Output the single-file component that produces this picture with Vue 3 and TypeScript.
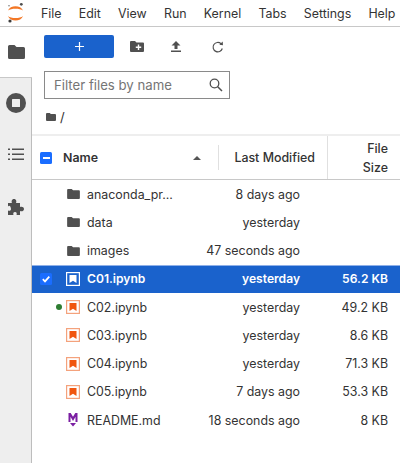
<script setup lang="ts">
interface Entry {
  name: string
  type: 'folder' | 'nb' | 'md'
  modified: string
  size: string
  selected?: boolean
  running?: boolean
}
const menus: string[] = ['File', 'Edit', 'View', 'Run', 'Kernel', 'Tabs', 'Settings', 'Help']
const entries: Entry[] = [
  { name: 'anaconda_pr...', type: 'folder', modified: '8 days ago', size: '' },
  { name: 'data', type: 'folder', modified: 'yesterday', size: '' },
  { name: 'images', type: 'folder', modified: '47 seconds ago', size: '' },
  { name: 'C01.ipynb', type: 'nb', modified: 'yesterday', size: '56.2 KB', selected: true },
  { name: 'C02.ipynb', type: 'nb', modified: 'yesterday', size: '49.2 KB', running: true },
  { name: 'C03.ipynb', type: 'nb', modified: 'yesterday', size: '8.6 KB' },
  { name: 'C04.ipynb', type: 'nb', modified: 'yesterday', size: '71.3 KB' },
  { name: 'C05.ipynb', type: 'nb', modified: '7 days ago', size: '53.3 KB' },
  { name: 'README.md', type: 'md', modified: '18 seconds ago', size: '8 KB' },
]
</script>

<template>
  <div class="app">
    <header class="menubar">
      <svg class="logo" width="24" height="26" viewBox="0 0 24 26">
        <path d="M8 10.500 C10 4.800 21 4.800 23 10.500 C20 8 11 8 8 10.500Z" fill="#f37726" />
        <path d="M8 16 C10 22 21 22 23 16 C20 18.800 11 18.800 8 16Z" fill="#f37726" />
        <circle cx="21.300" cy="4.300" r="1.400" fill="#4e4e4e" />
        <circle cx="9" cy="5.800" r="0.800" fill="#7a7a7a" />
        <circle cx="10" cy="21" r="1.600" fill="#3c3c3c" />
      </svg>
      <nav class="menus">
        <span v-for="m in menus" :key="m">{{ m }}</span>
      </nav>
    </header>
    <div class="main">
      <aside class="sidebar">
        <div class="tab active">
          <svg width="17" height="14" viewBox="0 0 17 14">
            <path d="M1.500 0h5l2 2h7A1.500 1.500 0 0 1 17 3.500v9a1.500 1.500 0 0 1-1.500 1.500h-14A1.500 1.500 0 0 1 0 12.500v-11A1.500 1.500 0 0 1 1.500 0Z" fill="#505050" />
          </svg>
        </div>
        <div class="tab stop">
          <svg width="20" height="20" viewBox="0 0 20 20">
            <circle cx="10" cy="10" r="10" fill="#505050" />
            <rect x="6" y="6" width="8" height="8" rx="0.500" fill="#eeeeee" />
          </svg>
        </div>
        <div class="tab list">
          <svg width="16" height="13" viewBox="0 0 16 13" fill="#505050">
            <rect x="0" y="0.500" width="2" height="1.500" />
            <rect x="4" y="0.500" width="12" height="1.500" />
            <rect x="0" y="5.500" width="2" height="1.500" />
            <rect x="4" y="5.500" width="12" height="1.500" />
            <rect x="0" y="10.500" width="2" height="1.500" />
            <rect x="4" y="10.500" width="12" height="1.500" />
          </svg>
        </div>
        <div class="tab puzzle">
          <svg width="18" height="18" viewBox="0 0 18 18">
            <path d="M1 5h4C4.300 3.800 4.500 1 7 1s2.700 2.800 2 4h4v4c1.200-.7 4-.5 4 2s-2.800 2.700-4 2v4H9.500c.5-1.500.3-3-1.500-3s-2 1.500-1.500 3H1v-4.500c1.500.5 3 .3 3-1.500S2.500 6.500 1 8.500Z" fill="#505050" />
          </svg>
        </div>
      </aside>
      <section class="browser">
        <div class="toolbar">
          <button class="new" type="button">
            <svg width="9" height="9" viewBox="0 0 9 9"><path d="M3.900 0h1.200v3.900H9v1.200H5.100V9H3.900V5.100H0V3.900h3.900Z" fill="#fff" /></svg>
          </button>
          <svg class="tool t1" width="14" height="11" viewBox="0 0 14 11">
            <path d="M1 0h4l1.500 1.500H13a1 1 0 0 1 1 1V10a1 1 0 0 1-1 1H1a1 1 0 0 1-1-1V1a1 1 0 0 1 1-1Z" fill="#505050" />
            <path d="M7.800 3.500h1.400v2h2v1.400h-2v2H7.800v-2h-2V5.500h2Z" fill="#fff" />
          </svg>
          <svg class="tool t2" width="10" height="11" viewBox="0 0 10 11">
            <path d="M5 0 9.500 4.500H6.500V8h-3V4.500H.5Z M0 9.500h10V11H0Z" fill="#505050" />
          </svg>
          <svg class="tool t3" width="12" height="12" viewBox="0 0 12 12">
            <path d="M10.300 7.500A4.700 4.700 0 1 1 9 2.700" fill="none" stroke="#505050" stroke-width="1.200" />
            <path d="M7.300 3.800 11 4.200 10.700.5Z" fill="#505050" />
          </svg>
        </div>
        <div class="filter">
          <span class="placeholder">Filter files by name</span>
          <svg width="14" height="14" viewBox="0 0 14 14">
            <circle cx="5.500" cy="5.500" r="4.300" fill="none" stroke="#505050" stroke-width="1.300" />
            <path d="M8.700 8.700 13 13" stroke="#505050" stroke-width="1.500" />
          </svg>
        </div>
        <div class="crumbs">
          <svg width="10" height="8" viewBox="0 0 10 8">
            <path d="M1 0h2.800l1 1H9a1 1 0 0 1 1 1v5a1 1 0 0 1-1 1H1a1 1 0 0 1-1-1V1a1 1 0 0 1 1-1Z" fill="#505050" />
          </svg>
          <span>/</span>
        </div>
        <div class="band"></div>
        <div class="head">
          <div class="h-check"><span class="minus"></span></div>
          <div class="h-name">
            <span>Name</span>
            <i class="caret"></i>
          </div>
          <div class="h-mod">Last Modified</div>
          <div class="h-size">File<br />Size</div>
        </div>
        <ul class="rows">
          <li v-for="e in entries" :key="e.name" class="row" :class="{ selected: e.selected }">
            <span class="check">
              <svg v-if="e.selected" width="12" height="12" viewBox="0 0 12 12">
                <rect width="12" height="12" rx="1.500" fill="#1a6dff" />
                <path d="M2.800 6.200 5 8.400 9.300 3.600" fill="none" stroke="#fff" stroke-width="1.700" />
              </svg>
            </span>
            <span class="dot-slot"><i v-if="e.running" class="dot"></i></span>
            <span class="icon">
              <svg v-if="e.type === 'folder'" width="13" height="10" viewBox="0 0 14 11">
                <path d="M1 0h4l1.500 1.500H13a1 1 0 0 1 1 1V10a1 1 0 0 1-1 1H1a1 1 0 0 1-1-1V1a1 1 0 0 1 1-1Z" fill="#505050" />
              </svg>
              <svg v-else-if="e.type === 'nb'" width="14" height="14" viewBox="0 0 14 14">
                <rect x="0.600" y="0.600" width="12.800" height="12.800" fill="none" :stroke="e.selected ? '#fff' : '#f4a27c'" stroke-width="1.200" />
                <path d="M3.500 3h7v8L7 8.800 3.500 11Z" :fill="e.selected ? '#fff' : '#f0560f'" />
              </svg>
              <svg v-else width="10" height="14" viewBox="0 0 10 14">
                <path d="M.5 0h2.200L5 3.800 7.300 0h2.200v9H7.500V3.800L5 8 2.500 3.800V9H.5Z" fill="#7b1fa2" />
                <path d="M2 10h6l-3 3.500Z" fill="#7b1fa2" />
              </svg>
            </span>
            <span class="name">{{ e.name }}</span>
            <span class="mod">{{ e.modified }}</span>
            <span class="size">{{ e.size }}</span>
          </li>
        </ul>
      </section>
    </div>
  </div>
</template>

<style>
html, body { margin: 0; background: #fff; }
</style>

<style scoped>
.app {
  width: 400px;
  height: 463px;
  overflow: hidden;
  display: flex;
  flex-direction: column;
  font-family: Inter, "Liberation Sans", sans-serif;
  font-size: 12.400px;
  color: #333;
  background: #fff;
}
.menubar {
  height: 26px;
  flex: none;
  display: flex;
  align-items: center;
  border-bottom: 1px solid #c8c8c8;
}
.logo { flex: none; }
.menus { display: flex; margin-left: 17px; gap: 17.200px; white-space: nowrap; }
.main { flex: 1; display: flex; min-height: 0; }
.sidebar {
  width: 32px;
  flex: none;
  box-sizing: border-box;
  background: #eeeeee;
  border-right: 1px solid #bdbdbd;
  display: flex;
  flex-direction: column;
}
.tab { display: flex; justify-content: center; align-items: center; width: 32px; flex: none; }
.tab.active {
  height: 51px;
  background: #fff;
  border-bottom: 1px solid #c8c8c8;
  box-sizing: border-box;
}
.tab.stop { height: 50px; }
.tab.list { height: 53px; }
.tab.puzzle { height: 52px; }
.browser { flex: 1; min-width: 0; display: flex; flex-direction: column; }
.toolbar { height: 23px; margin-top: 8px; display: flex; align-items: center; padding-left: 12px; }
.new {
  width: 70px;
  height: 23px;
  border: 0;
  padding: 0;
  border-radius: 2px;
  background: #1a62cc;
  display: flex;
  align-items: center;
  justify-content: center;
}
.t1 { margin-left: 16px; }
.t2 { margin-left: 27px; }
.t3 { margin-left: 31px; }
.filter {
  margin: 13px 0 0 12px;
  width: 186px;
  height: 28px;
  box-sizing: border-box;
  border: 1px solid #8a8a8a;
  display: flex;
  align-items: center;
  justify-content: space-between;
  padding: 0 6px 0 9px;
}
.placeholder { color: #757575; font-size: 13.200px; }
.crumbs {
  height: 35px;
  display: flex;
  align-items: center;
  gap: 4px;
  padding-left: 14px;
  font-size: 13px;
}
.band { height: 2px; background: #eeeeee; }
.head {
  height: 43px;
  flex: none;
  display: flex;
  align-items: center;
  border-bottom: 1px solid #c8c8c8;
  font-weight: 600;
}
.h-check { width: 31px; display: flex; justify-content: flex-end; flex: none; }
.minus {
  width: 12px;
  height: 12px;
  background: #1a6dff;
  border-radius: 1.500px;
  margin-right: 11px;
  position: relative;
}
.minus::after {
  content: "";
  position: absolute;
  left: 2.500px;
  right: 2.500px;
  top: 5px;
  height: 2px;
  background: #fff;
}
.h-name {
  width: 156px;
  flex: none;
  display: flex;
  align-items: center;
  justify-content: space-between;
  padding-right: 17px;
  box-sizing: border-box;
  border-right: 1px solid #e0e0e0;
  height: 25px;
}
.caret {
  width: 0;
  height: 0;
  border-left: 4px solid transparent;
  border-right: 4px solid transparent;
  border-bottom: 4px solid #555;
}
.h-mod { width: 108px; flex: none; box-sizing: border-box; text-align: right; padding-right: 12px; white-space: nowrap; font-weight: 500; }
.h-size {
  flex: 1;
  align-self: stretch;
  border-left: 1px solid #e0e0e0;
  text-align: right;
  padding-right: 12px;
  display: flex;
  align-items: center;
  justify-content: flex-end;
  line-height: 19px;
  font-weight: 500;
}
.rows { list-style: none; margin: 0; padding: 0; }
.row {
  height: 28.250px;
  display: flex;
  align-items: center;
  white-space: nowrap;
}
.row.selected {
  background: #1a62cc;
  color: #fff;
  font-weight: 600;
  font-size: 12.100px;
  box-shadow: inset 0 1px 0 #8fb0e8;
}
.check { width: 16px; margin-left: 8px; flex: none; display: flex; }
.dot-slot { width: 7px; flex: none; display: flex; }
.dot { width: 6px; height: 6px; border-radius: 50%; background: #2e7d32; }
.icon { width: 14px; margin-left: 3px; flex: none; display: flex; justify-content: center; }
.name { width: 106px; flex: none; margin-left: 7px; }
.mod { width: 107px; flex: none; text-align: right; }
.size { width: 88px; flex: none; text-align: right; }
</style>
